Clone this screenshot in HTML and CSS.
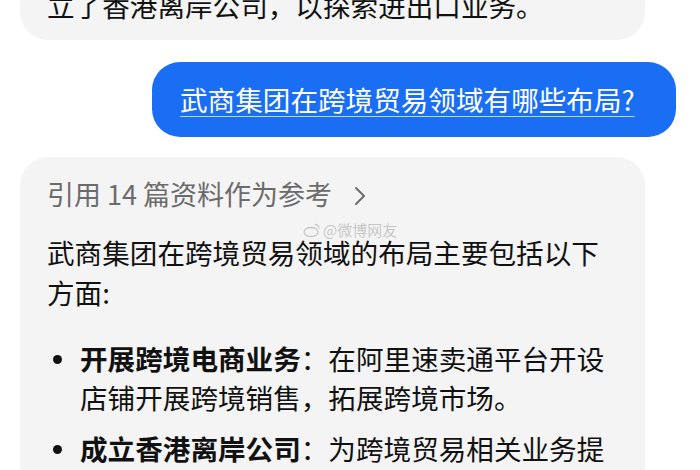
FILE: index.html
```html
<!DOCTYPE html>
<html lang="zh-CN">
<head>
    <meta charset="UTF-8">
    <meta name="viewport" content="width=device-width, initial-scale=1.0">
    <title>对话</title>
    <link rel="stylesheet" href="styles.css">
</head>
<body>

<div class="chat">
    <div class="bubble bubble-ai bubble-prev">
        <p>立了香港离岸公司，以探索进出口业务。</p>
    </div>

    <div class="bubble bubble-user">
        <p>武商集团在跨境贸易领域有哪些布局?</p>
    </div>

    <div class="bubble bubble-ai bubble-answer">
        <p class="refs">引用 14 篇资料作为参考
            <svg class="chevron" width="12" height="20" viewBox="0 0 12 20"><path d="M2 2 L10 10 L2 18" fill="none" stroke="#6b6b6b" stroke-width="2" stroke-linecap="round" stroke-linejoin="round"/></svg>
        </p>
        <span class="watermark">
            <svg width="18" height="14" viewBox="0 0 18 14"><ellipse cx="8" cy="9" rx="7" ry="4.5" fill="none" stroke="currentColor" stroke-width="1.3"/><path d="M12 1.5 a4 4 0 0 1 4 4" fill="none" stroke="currentColor" stroke-width="1.3"/></svg>@微博网友
        </span>
        <p class="lead">武商集团在跨境贸易领域的布局主要包括以下方面:</p>
        <ul class="points">
            <li><b>开展跨境电商业务</b>：在阿里速卖通平台开设店铺开展跨境销售，拓展跨境市场。</li>
            <li><b>成立香港离岸公司</b>：为跨境贸易相关业务提供支持与服务。</li>
        </ul>
    </div>
</div>

</body>
</html>
```

FILE: styles.css
```css
body {
    margin: 0;
    background: #ffffff;
    font-family: "Noto Sans CJK SC", "Noto Sans", sans-serif;
    color: #111111;
    overflow: hidden;
}

.chat {
    display: flex;
    flex-direction: column;
    width: 700px;
    height: 470px;
    overflow: hidden;
}

.bubble {
    font-size: 27.6px;
    line-height: 40px;
    border-radius: 28px;
}

.bubble p {
    margin: 0;
}

.bubble-ai {
    background: #f4f4f4;
    margin-left: 20px;
    width: 625px;
    box-sizing: border-box;
    padding: 20px 30px 15px 27px;
}

.bubble-prev {
    margin-top: -35px;
}

.bubble-user {
    align-self: flex-end;
    margin: 22px 24px 0 0;
    width: 524px;
    box-sizing: border-box;
    padding: 17px 10px 18px 28px;
    background: #1a6ef4;
    color: #ffffff;
}

.bubble-user p {
    text-decoration: underline;
    text-decoration-color: rgba(255, 255, 255, 0.7);
    text-decoration-thickness: 1px;
    text-underline-offset: 5px;
}

.bubble-answer {
    position: relative;
    margin-top: 20px;
    padding-top: 17px;
    flex: 1 0 auto;
    border-radius: 28px 28px 0 0;
}

.refs {
    font-size: 27px;
    color: #6b6b6b;
}

.chevron {
    margin-left: 16px;
    vertical-align: -1px;
}

.watermark {
    position: absolute;
    left: 283px;
    top: 64px;
    display: flex;
    align-items: center;
    gap: 2px;
    font-size: 15px;
    line-height: 18px;
    color: rgba(140, 140, 140, 0.45);
}

.lead {
    margin-top: 18px !important;
}

.points {
    list-style: none;
    margin: 27px 0 0;
    padding: 0 0 0 33px;
}

.points li {
    position: relative;
    margin-bottom: 12px;
    line-height: 39px;
}

.points li::before {
    content: "";
    position: absolute;
    left: -27px;
    top: 16px;
    width: 9px;
    height: 9px;
    border-radius: 50%;
    background: #111111;
}

.points b {
    font-weight: 700;
}
```
